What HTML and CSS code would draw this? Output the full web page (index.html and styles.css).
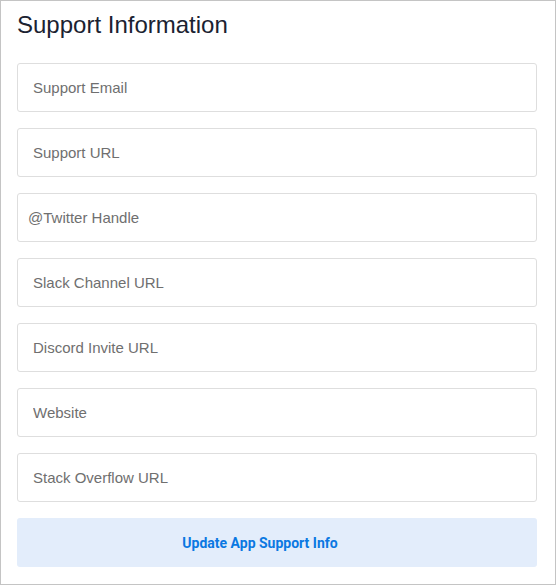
FILE: index.html
```html
<!DOCTYPE html>
<html lang="en">
<head>
<meta charset="utf-8">
<title>Support Information</title>
<link rel="stylesheet" href="styles.css">
</head>
<body>
<form class="panel">
  <h2 class="title">Support Information</h2>
  <input class="field" type="email" placeholder="Support Email">
  <input class="field" type="url" placeholder="Support URL">
  <input class="field field-twitter" type="text" placeholder="@Twitter Handle">
  <input class="field" type="url" placeholder="Slack Channel URL">
  <input class="field" type="url" placeholder="Discord Invite URL">
  <input class="field" type="url" placeholder="Website">
  <input class="field" type="url" placeholder="Stack Overflow URL">
  <button class="submit" type="button">Update App Support Info</button>
</form>
</body>
</html>
```
FILE: styles.css
```css
html, body {
  margin: 0;
  padding: 0;
  background: #ffffff;
}

.panel {
  box-sizing: border-box;
  width: 556px;
  height: 585px;
  border: 1px solid #c4c4c4;
  padding: 8px 18px 17px 16px;
  display: flex;
  flex-direction: column;
  gap: 16px;
}

.title {
  margin: 0 0 6px 0;
  font-family: "Liberation Sans", Arial, sans-serif;
  font-weight: 400;
  font-size: 24px;
  line-height: 32px;
  color: #1b2231;
}

.field {
  box-sizing: border-box;
  width: 100%;
  height: 49px;
  margin: 0;
  border: 1px solid #dedede;
  border-radius: 3px;
  padding: 0 15px;
  font-family: "Liberation Sans", Arial, sans-serif;
  font-size: 15px;
  color: #333333;
  background: #ffffff;
  outline: none;
}

.field::placeholder {
  color: #6f6f6f;
  opacity: 1;
}

.field-twitter {
  padding-left: 10px;
}

.submit {
  box-sizing: border-box;
  width: 100%;
  height: 49px;
  margin: 0;
  border: none;
  border-radius: 3px;
  padding: 0 34px 0 0;
  background: #e3edfb;
  color: #0a78e2;
  font-family: Roboto, "Liberation Sans", sans-serif;
  font-weight: 700;
  font-size: 14px;
  cursor: pointer;
}
```
